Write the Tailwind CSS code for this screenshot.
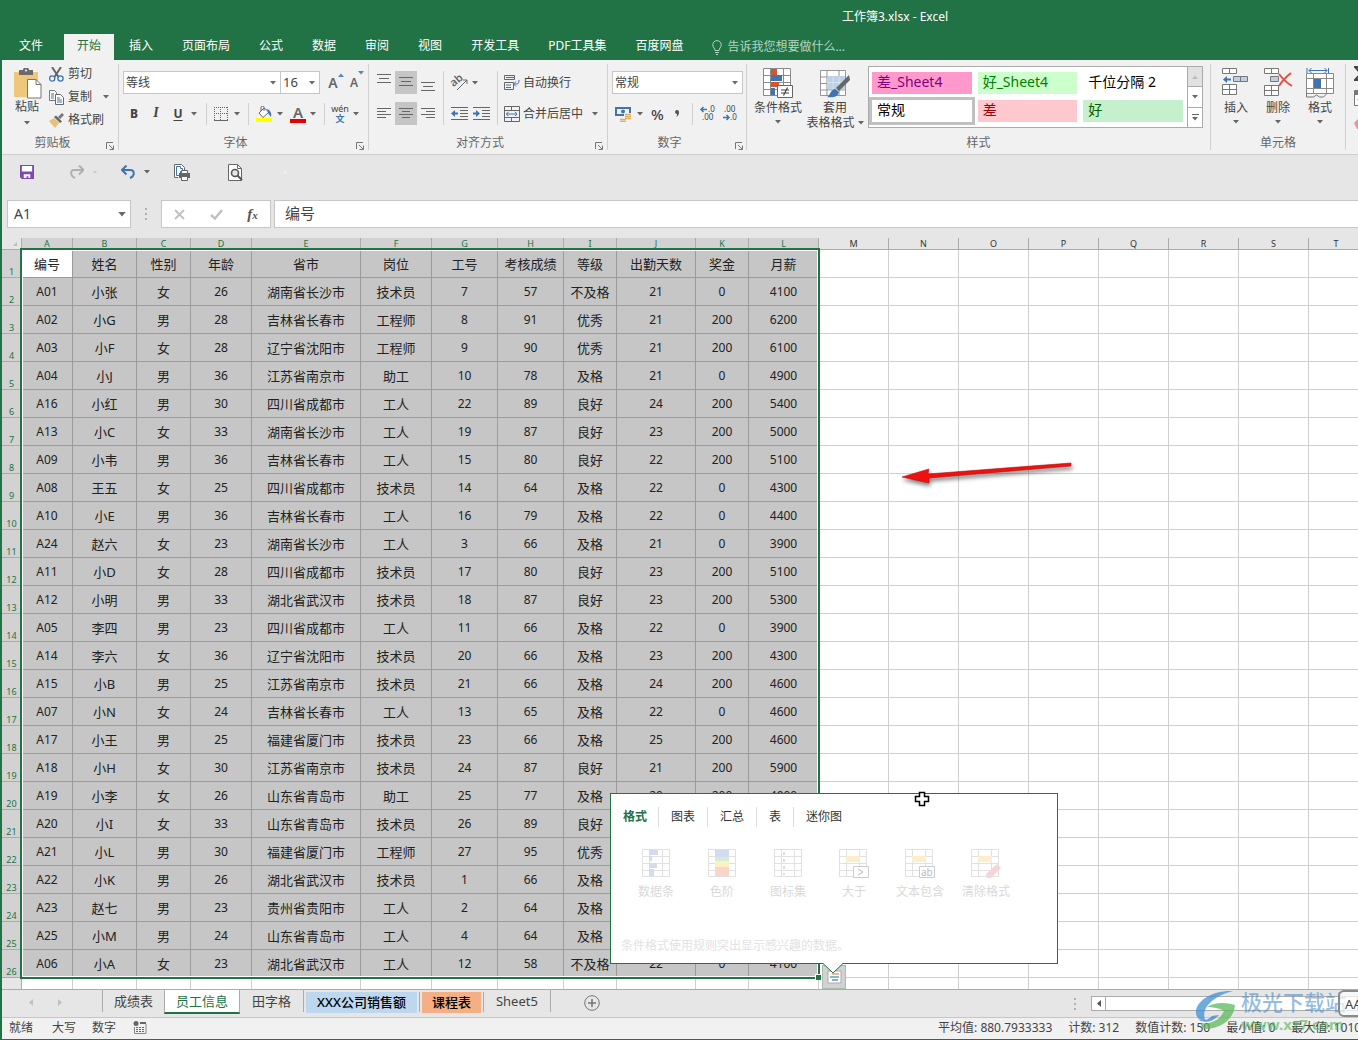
<!DOCTYPE html>
<html lang="zh-CN">
<head>
<meta charset="utf-8">
<meta name="viewport" content="width=device-width, initial-scale=1">
<title>工作簿3.xlsx - Excel</title>
<script src="https://cdn.jsdelivr.net/npm/@tailwindcss/browser@4"></script>
</head>
<body class="min-h-screen flex flex-col overflow-hidden border-l-2 border-b-2 border-[#217346] bg-[#e6e6e6] font-['Noto_Sans','Noto_Sans_CJK_SC',sans-serif] text-xs text-[#444]">

<svg class="hidden" aria-hidden="true">
  <symbol id="caret" viewBox="0 0 6 4"><path d="M0 0h6L3 3.5z" fill="currentColor" opacity=".8"/></symbol>
  <symbol id="launch" viewBox="0 0 8 8"><path d="M.5 7V.5H7M3 3l4 4M7.5 3.5v4h-4" fill="none" stroke="#777"/></symbol>
  <symbol id="grid" viewBox="0 0 28 28"><path d="M.5 .5h27v27H.5zM.5 7.5h27M.5 14.5h27M.5 21.5h27M7.5 .5v27M20.5 .5v27" fill="#fff" stroke="#8a8a8a"/></symbol>
</svg>

<!-- Title bar and ribbon tabs -->
<header class="bg-[#217346] text-white">
  <div class="flex h-[34px] items-center justify-center pl-[430px]"><h1>工作簿3.xlsx - Excel</h1></div>
  <nav class="flex h-[26px] gap-px whitespace-nowrap pl-1 leading-6">
    <a href="#" class="mr-[6px] pl-[13px] pr-[14px]">文件</a>
    <a href="#" class="bg-[#f1f1f1] px-[13px] text-[#217346]">开始</a>
    <a href="#" class="px-[14px]">插入</a>
    <a href="#" class="px-[14px]">页面布局</a>
    <a href="#" class="px-[14px]">公式</a>
    <a href="#" class="px-[14px]">数据</a>
    <a href="#" class="px-[14px]">审阅</a>
    <a href="#" class="px-[14px]">视图</a>
    <a href="#" class="px-[14px]">开发工具</a>
    <a href="#" class="px-[14px]">PDF工具集</a>
    <a href="#" class="px-[14px]">百度网盘</a>
    <a href="#" class="flex items-center gap-[5px] px-[14px] text-[#b5d3c2]">
      <svg class="h-[15px] w-[10px]" viewBox="0 0 10 15" fill="none" stroke="currentColor"><path d="M3 10.500C3 8.500 .8 7.500 .8 4.800a4.200 4.200 0 0 1 8.400 0C9.200 7.500 7 8.500 7 10.500zM3 12.500h4M4 14.500h2"/></svg>告诉我您想要做什么...</a>
  </nav>
</header>

<!-- Ribbon -->
<section class="flex h-[95px] overflow-hidden whitespace-nowrap border-b border-[#cfcfcf] bg-[#f1f1f1] py-1">
  <!-- Clipboard -->
  <div class="flex w-[117px] shrink-0 flex-col border-r border-[#d0d0d0]">
    <div class="flex flex-1 gap-2 pl-[11px]">
      <button class="flex w-7 flex-col items-center pt-1 leading-4">
        <svg class="h-[31px] w-[30px] shrink-0" viewBox="0 0 30 31"><path d="M2 4h24v25H2z" fill="#eec67c"/><path d="M7 2h4a3 2.500 0 0 1 6 0h4v5H7z" fill="#6a6a6a"/><circle cx="14" cy="2.500" r="1" fill="#fff"/><path d="M15.500 11.500h8.500l5 5v13.500H15.500z" fill="#fff" stroke="#777"/><path d="M24 11.500v5h5" fill="none" stroke="#777"/></svg>
        <span>粘贴</span><svg class="mt-1.5 h-1 w-1.5"><use href="#caret"/></svg>
      </button>
      <div class="flex flex-col gap-[3px]">
        <button class="flex h-5 items-center gap-1"><svg class="size-[15px]" viewBox="0 0 15 15" fill="none"><path d="M3 0l6.500 10M12 0L5.500 10" stroke="#666" stroke-width="2"/><circle cx="3.200" cy="11.500" r="2.600" stroke="#3f74b0" stroke-width="1.300"/><circle cx="11.500" cy="11.500" r="2.600" stroke="#3f74b0" stroke-width="1.300"/></svg>剪切</button>
        <button class="flex h-5 items-center gap-1"><svg class="size-[15px]" viewBox="0 0 15 15" fill="#fff"><path d="M.5 .5h5l2 2v8h-7z" stroke="#777"/><path d="M6.500 4.500h5l3 3v7h-8z" stroke="#666"/><path d="M2 4h3M2 6h3M2 8h3M8 8h3M8 10h5M8 12h5" stroke="#3f74b0"/></svg>复制<svg class="ml-[7px] h-1 w-1.5"><use href="#caret"/></svg></button>
        <button class="flex h-5 items-center gap-1"><svg class="size-[15px]" viewBox="0 0 15 15"><path d="M0 8l5-3 5 5-4 5z" fill="#eabf78"/><path d="M5 4l2-1.500 6 6L11 10z" fill="#666"/><path d="M9 4l4-4 2 2-4 4z" fill="#777"/></svg>格式刷</button>
      </div>
    </div>
    <div class="flex h-3.5 items-end leading-[14px]"><span class="flex-1 pr-[3px] text-center text-[#666]">剪贴板</span><button aria-label="剪贴板设置" class="mr-1"><svg class="size-2"><use href="#launch"/></svg></button></div>
  </div>
  <!-- Font -->
  <div class="flex w-[250px] shrink-0 flex-col border-r border-[#d0d0d0]">
    <div class="flex flex-1 flex-col gap-2 pl-1 pt-[7px]">
      <div class="flex h-[23px] items-center">
        <label class="flex h-full w-[158px] items-center border border-[#c6c6c6] bg-white pr-1"><select aria-label="字体" class="flex-1 appearance-none pl-0.5"><option>等线</option></select><svg class="h-1 w-1.5"><use href="#caret"/></svg></label>
        <label class="flex h-full w-[39px] items-center border border-l-0 border-[#c6c6c6] bg-white pr-1"><select aria-label="字号" class="w-6 flex-1 appearance-none pl-0.5 text-[13px]"><option>16</option></select><svg class="h-1 w-1.5"><use href="#caret"/></svg></label>
        <button class="relative ml-1 w-[18px] text-[14px] font-semibold leading-5 text-[#666]">A<svg class="absolute -right-0.5 top-0 h-1 w-1.5 rotate-180 text-[#2f6cb0]"><use href="#caret"/></svg></button>
        <button class="relative ml-1 w-[16px] text-xs font-semibold leading-4 text-[#666]">A<svg class="absolute -right-0.5 -top-1 h-1 w-1.5 text-[#2f6cb0]"><use href="#caret"/></svg></button>
      </div>
      <div class="flex h-[23px] items-center">
        <button class="w-[22px] font-extrabold">B</button>
        <button class="w-[22px] font-['Liberation_Serif',serif] text-[14px] font-bold italic">I</button>
        <button class="w-[22px] font-bold underline underline-offset-2">U</button>
        <svg class="ml-[2px] mr-[9px] h-1 w-1.5"><use href="#caret"/></svg>
        <span class="h-[22px] w-px bg-[#d0d0d0]"></span>
        <button aria-label="边框" class="ml-[7px]"><svg class="size-[14px]" viewBox="0 0 14 14" fill="none" stroke="#666"><path d="M0 .5h14M0 6.500h14M.5 0v13M6.500 0v13M13.500 0v13" stroke-dasharray="1 1"/><path d="M0 13.500h14"/></svg></button>
        <svg class="ml-1.5 mr-2 h-1 w-1.5"><use href="#caret"/></svg>
        <span class="h-[22px] w-px bg-[#d0d0d0]"></span>
        <button aria-label="填充颜色" class="ml-[7px]"><svg class="size-4" viewBox="0 0 16 16"><path d="M0 12h16v4H0z" fill="#ff0"/><path d="M3 7l5-5 5 4-6 5.500z" fill="#fff" stroke="#666"/><path d="M5 5V1.500a1.500 1.500 0 0 1 3 0V5" fill="none" stroke="#666"/><path d="M11 3c3 1 5 4 4 8l-3-4z" fill="#3f74b0"/></svg></button>
        <svg class="ml-[5px] mr-[7px] h-1 w-1.5"><use href="#caret"/></svg>
        <button class="h-[18px] w-4 border-b-4 border-[#e60000] text-[15px] font-semibold leading-[14px] text-[#666]">A</button>
        <svg class="ml-1 mr-2 h-1 w-1.5"><use href="#caret"/></svg>
        <span class="h-[22px] w-px bg-[#d0d0d0]"></span>
        <button class="ml-[6px] flex w-[18px] flex-col items-center text-[9px] leading-[10px]"><span>wén</span><span class="font-bold text-[#3f74b0]">文</span></button>
        <svg class="ml-1 h-1 w-1.5"><use href="#caret"/></svg>
      </div>
    </div>
    <div class="flex h-3.5 items-end leading-[14px]"><span class="flex-1 pr-1 text-center text-[#666]">字体</span><button aria-label="字体设置" class="mr-1"><svg class="size-2"><use href="#launch"/></svg></button></div>
  </div>
  <!-- Alignment -->
  <div class="flex w-[239px] shrink-0 flex-col border-r border-[#d0d0d0]">
    <div class="flex flex-1 pl-1 pt-[7px]">
      <div class="grid grid-cols-3 content-start gap-y-2">
        <button aria-label="顶端对齐" class="h-[23px] w-[22px] px-1"><svg class="h-[23px] w-[14px]" viewBox="0 0 14 23" stroke="#666"><path d="M0 3.500h14M2 7.500h10M0 11.500h14"/></svg></button>
        <button aria-label="垂直居中" class="h-[23px] w-[22px] bg-[#c5c5c5] px-1"><svg class="h-[23px] w-[14px]" viewBox="0 0 14 23" stroke="#666"><path d="M0 6.500h14M2 10.500h10M0 14.500h14"/></svg></button>
        <button aria-label="底端对齐" class="h-[23px] w-[22px] px-1"><svg class="h-[23px] w-[14px]" viewBox="0 0 14 23" stroke="#666"><path d="M0 11.500h14M2 15.500h10M0 19.500h14"/></svg></button>
        <button aria-label="左对齐" class="h-[23px] w-[22px] px-1"><svg class="h-[23px] w-[14px]" viewBox="0 0 14 23" stroke="#666"><path d="M0 6.500h14M0 9.500h9M0 12.500h14M0 15.500h9"/></svg></button>
        <button aria-label="居中" class="h-[23px] w-[22px] bg-[#c5c5c5] px-1"><svg class="h-[23px] w-[14px]" viewBox="0 0 14 23" stroke="#666"><path d="M0 6.500h14M3 9.500h8M0 12.500h14M3 15.500h8"/></svg></button>
        <button aria-label="右对齐" class="h-[23px] w-[22px] px-1"><svg class="h-[23px] w-[14px]" viewBox="0 0 14 23" stroke="#666"><path d="M0 6.500h14M5 9.500h9M0 12.500h14M5 15.500h9"/></svg></button>
      </div>
      <span class="ml-1 h-[54px] w-px bg-[#d0d0d0]"></span>
      <div class="flex w-[53px] flex-col gap-2 pl-[7px]">
        <button aria-label="方向" class="flex h-[23px] items-center gap-1"><svg class="size-[17px] overflow-visible" viewBox="0 0 17 17"><text x="1" y="11" font-size="11" font-weight="600" fill="#666" transform="rotate(-40 5 10)">ab</text><path d="M6 16L16 6M12 6h4v4" fill="none" stroke="#666"/></svg><svg class="h-1 w-1.5"><use href="#caret"/></svg></button>
        <div class="flex h-[23px] items-center gap-[5px]">
          <button aria-label="减少缩进"><svg class="h-[13px] w-[17px]" viewBox="0 0 17 13"><path d="M0 .5h17M9 3.500h8M9 6.500h8M9 9.500h8M0 12.500h17" stroke="#666"/><path d="M0 6.500l4-3.500v2.500h3v2H4V10z" fill="#3f74b0"/></svg></button>
          <button aria-label="增加缩进"><svg class="h-[13px] w-[17px]" viewBox="0 0 17 13"><path d="M0 .5h17M9 3.500h8M9 6.500h8M9 9.500h8M0 12.500h17" stroke="#666"/><path d="M7 6.500L3 3v2.500H0v2h3V10z" fill="#3f74b0"/></svg></button>
        </div>
      </div>
      <span class="h-[54px] w-px bg-[#d0d0d0]"></span>
      <div class="flex flex-1 flex-col gap-2 pl-[6px]">
        <button class="flex h-[23px] items-center gap-[3px]"><svg class="h-4 w-4" viewBox="0 0 16 16" fill="none"><path d="M.5 .5h10v4H.5zM.5 7.500h9v7H.5z" stroke="#666"/><path d="M2 2.500h9M2 10h5M2 12.500h5M10 9h3c2 0 2-3 2-4M12 6.500L9.500 9l2.500 2.500" stroke="#3f74b0"/></svg>自动换行</button>
        <button class="flex h-[23px] items-center gap-[3px]"><svg class="h-4 w-4" viewBox="0 0 16 16" fill="none"><path d="M.5 .5h15v15H.5zM.5 4.500h15M.5 11.500h15M7.500 .5v4M7.500 11.500v4" stroke="#666"/><path d="M2 8h11M4.500 5.800L2.500 8l2 2.200M11 5.800L13 8l-2 2.200" stroke="#3f74b0"/></svg>合并后居中<svg class="ml-1.5 h-1 w-1.5"><use href="#caret"/></svg></button>
      </div>
    </div>
    <div class="flex h-3.5 items-end leading-[14px]"><span class="flex-1 pr-1 text-center text-[#666]">对齐方式</span><button aria-label="对齐设置" class="mr-1"><svg class="size-2"><use href="#launch"/></svg></button></div>
  </div>
  <!-- Number -->
  <div class="flex w-[139px] shrink-0 flex-col border-r border-[#d0d0d0]">
    <div class="flex flex-1 flex-col gap-2 pl-1 pr-[3px] pt-[7px]">
      <label class="flex h-[23px] items-center border border-[#c6c6c6] bg-white pr-1"><select aria-label="数字格式" class="flex-1 appearance-none pl-0.5"><option>常规</option></select><svg class="h-1 w-1.5"><use href="#caret"/></svg></label>
      <div class="flex h-[23px] items-center">
        <button aria-label="会计数字格式" class="ml-[3px]"><svg class="size-4" viewBox="0 0 16 16"><path d="M0 1h16v9H0z" fill="#3f74b0"/><path d="M2 3h12v5H2z" fill="#f1f1f1"/><circle cx="8" cy="5.500" r="2" fill="#3f74b0"/><path d="M9 7h7v6H9zM5 12h7v4H5z" fill="#f1f1f1"/><path d="M10 8.500h6M10 10.500h6M10 12.500h6M5 13.500h6M5 15.500h6" stroke="#e0ae5c" stroke-width="1.500"/></svg></button>
        <svg class="ml-1.5 mr-[8px] h-1 w-1.5"><use href="#caret"/></svg>
        <button class="text-[15px] font-medium leading-5">%</button>
        <button aria-label="千位分隔样式" class="ml-[10px] flex h-[18px] w-2 items-center"><svg class="h-2 w-1.5" viewBox="0 0 6 8"><path d="M1 2a2 2 0 0 1 4 0c0 3-1 4-3 5 1-1 1-2 1-3C2 4 1 3 1 2z" fill="#555"/></svg></button>
        <span class="ml-2.5 h-[22px] w-px bg-[#d0d0d0]"></span>
        <button aria-label="增加小数位数" class="ml-[7px] h-[15px] w-4"><svg class="h-[15px] w-4 overflow-visible" viewBox="0 0 16 15"><text x="8" y="6" font-size="8" fill="#444">.0</text><text x="2" y="14" font-size="8" fill="#444">.00</text><path d="M1 3.500h6M3.500 1L1 3.500 3.500 6" stroke="#3f74b0" stroke-width="1.500" fill="none"/></svg></button>
        <button aria-label="减少小数位数" class="ml-1.5 h-[15px] w-4"><svg class="h-[15px] w-4 overflow-visible" viewBox="0 0 16 15"><text x="2" y="6" font-size="8" fill="#444">.00</text><text x="8" y="14" font-size="8" fill="#444">.0</text><path d="M1 11.500h6M4.500 9L7 11.500 4.500 14" stroke="#3f74b0" stroke-width="1.500" fill="none"/></svg></button>
      </div>
    </div>
    <div class="flex h-3.5 items-end leading-[14px]"><span class="flex-1 pr-1 text-center text-[#666]">数字</span><button aria-label="数字设置" class="mr-[3px]"><svg class="size-2"><use href="#launch"/></svg></button></div>
  </div>
  <!-- Styles -->
  <div class="flex w-[464px] shrink-0 flex-col border-r border-[#d0d0d0]">
    <div class="flex flex-1 pl-1 pt-0.5">
      <button class="flex w-[54px] flex-col items-center pt-0.5 leading-4">
        <svg class="mb-px h-[31px] w-[30px] shrink-0" viewBox="0 0 30 31"><use href="#grid" width="28" height="28" y="0"/><path d="M8 1h6v6H8zM8 14h8v5H8z" fill="#d9532c"/><path d="M8 7h11v6H8zM8 20h4v7H8z" fill="#3f74b0"/><path d="M14.500 17.500h15v12h-15z" fill="#fff" stroke="#666"/><path d="M18 22h8M18 25h8M24.500 19.500l-4 8" stroke="#444" stroke-width="1.200"/></svg>
        <span>条件格式</span><svg class="mt-1 h-1 w-1.5"><use href="#caret"/></svg>
      </button>
      <button class="flex w-[60px] flex-col items-center pt-0.5 leading-4">
        <svg class="mb-px h-[31px] w-[30px] shrink-0" viewBox="0 0 30 31"><use href="#grid" width="26" height="26" y="2"/><path d="M7 8h18v13H7z" fill="#bcd0e6"/><path d="M13 8.500v13M19 8.500v13M7 14.500h18" stroke="#d7e4f1"/><path d="M29 7L16 20l3 3L30 12z" fill="#666"/><path d="M7 29c3-1 3-7 8-8l4 3c-1 5-7 6-12 5z" fill="#3f74b0"/></svg>
        <span>套用</span><span class="flex items-center gap-[3px] whitespace-nowrap leading-[14px]">表格格式<svg class="h-1 w-1.5"><use href="#caret"/></svg></span>
      </button>
      <div class="ml-[3px] flex h-[62px] w-[335px] border border-[#ababab] bg-white text-left text-[14px] leading-5 text-black">
        <div class="grid flex-1 grid-cols-3 content-center gap-x-1.5 gap-y-1.5 pl-[3px] pr-1">
          <button class="h-[22px] bg-[#ff99cc] pb-0.5 pl-[5px] text-left text-[#800080]">差_Sheet4</button>
          <button class="h-[22px] bg-[#ccffcc] pb-0.5 pl-[5px] text-left text-[#008000]">好_Sheet4</button>
          <button class="h-[22px] pb-0.5 pl-[5px] text-left">千位分隔 2</button>
          <button class="h-[22px] pb-0.5 pl-[5px] text-left outline-3 outline-[#c0c0c0]">常规</button>
          <button class="h-[22px] bg-[#ffc7ce] pb-0.5 pl-[5px] text-left text-[#9c0006]">差</button>
          <button class="h-[22px] bg-[#c6efce] pb-0.5 pl-[5px] text-left text-[#006100]">好</button>
        </div>
        <div class="flex w-[15px] flex-col divide-y divide-[#ababab] border-l border-[#ababab] text-[#444]">
          <button aria-label="上一行" class="flex flex-1 items-center justify-center bg-[#e1e1e1] text-[#b5b5b5]"><svg class="h-1 w-1.5 rotate-180"><use href="#caret"/></svg></button>
          <button aria-label="下一行" class="flex flex-1 items-center justify-center"><svg class="h-1 w-1.5"><use href="#caret"/></svg></button>
          <button aria-label="其他" class="flex flex-1 flex-col items-center justify-center gap-0.5"><span class="h-px w-[7px] bg-[#666]"></span><svg class="h-1 w-1.5"><use href="#caret"/></svg></button>
        </div>
      </div>
    </div>
    <div class="h-3.5 text-center leading-[14px] text-[#666]">样式</div>
  </div>
  <!-- Cells -->
  <div class="flex w-[135px] shrink-0 flex-col border-r border-[#d0d0d0]">
    <div class="flex flex-1 pl-1 pt-1">
      <button class="flex w-[42px] flex-col items-center leading-4">
        <svg class="mb-px h-[31px] w-[28px] shrink-0" viewBox="0 0 28 31" fill="#fff" stroke="#777"><path d="M.5 .5h14v5H.5zM7.500 .5v5M.5 16.500h14v10H.5zM7.500 16.500v10M.5 21.500h14"/><path d="M11.500 8.500h14v5h-14zM18.500 8.500v5" fill="#bcd0e6"/><path d="M1 11.500l4-3.500v2.500h4v2H5v2.500z" fill="#3f74b0" stroke="none"/></svg>
        <span>插入</span><svg class="mt-1 h-1 w-1.5"><use href="#caret"/></svg>
      </button>
      <button class="flex w-[42px] flex-col items-center leading-4">
        <svg class="mb-px h-[31px] w-[30px] shrink-0" viewBox="0 0 30 31" fill="#fff" stroke="#777"><path d="M1.500 .5h14v5h-14zM8.500 .5v5M1.500 17.500h14v10h-14zM8.500 17.500v10M1.500 22.500h14"/><path d="M7.500 8.500h8v5h-8z" fill="#bcd0e6"/><path d="M16 6c3 4 8 9 13 12M28 5c-5 4-9 8-12 13" fill="none" stroke="#e0523f" stroke-width="2"/></svg>
        <span>删除</span><svg class="mt-1 h-1 w-1.5"><use href="#caret"/></svg>
      </button>
      <button class="flex w-[42px] flex-col items-center leading-4">
        <svg class="mb-px h-[31px] w-[28px] shrink-0" viewBox="0 0 28 31"><path d="M.5 5.500h27v20H.5zM.5 10.500h27M.5 20.500h27M7.500 5.500v20M20.500 5.500v20" fill="#fff" stroke="#8a8a8a"/><path d="M8 11h7v9H8z" fill="#3f74b0"/><path d="M1 0v5M22.500 0v5M3 2.500h18M5.500 0L3 2.500 5.500 5M18.500 0L21 2.500 18.500 5" stroke="#3f74b0" fill="none"/><path d="M.5 25v4h7l3-2 3 2h4l3-3" fill="none" stroke="#777"/></svg>
        <span>格式</span><svg class="mt-1 h-1 w-1.5"><use href="#caret"/></svg>
      </button>
    </div>
    <div class="h-3.5 text-center leading-[14px] text-[#666]">单元格</div>
  </div>
  <!-- Editing -->
  <div class="flex w-24 shrink-0 flex-col gap-2 pl-2 pt-0.5">
    <button aria-label="自动求和"><svg class="size-4" viewBox="0 0 16 16"><path d="M12 4V1H1l6 6.500L1 14h11v-3" fill="none" stroke="#444" stroke-width="2"/></svg></button>
    <button aria-label="填充"><svg class="size-4" viewBox="0 0 16 16"><path d="M.5 .5h14v15H.5z" fill="#fff" stroke="#777"/><path d="M1 1h13v4H1z" fill="#777"/><path d="M8 6v6M4 9l4 4 4-4" stroke="#3f74b0" stroke-width="2" fill="none"/></svg></button>
    <button aria-label="清除"><svg class="size-4" viewBox="0 0 16 16"><path d="M0 9l8-8 6 6-8 8H3z" fill="#f08fa4"/></svg></button>
  </div>
</section>

<!-- Quick access -->
<section class="flex h-[34px] items-center pl-[18px]">
  <button aria-label="保存"><svg class="size-[14px]" viewBox="0 0 15 15"><path d="M0 0h15v15H2l-2-2z" fill="#7d4bb0"/><path d="M2 1h11v6H2zM4 10h7v4H9v-2H7v2H4z" fill="#fff"/></svg></button>
  <button aria-label="恢复" class="ml-[35px]"><svg class="h-[14px] w-[15px]" viewBox="0 0 15 14"><path d="M14 5H5C1 5 1 11 6 13M10 .5L14.500 5 10 9.500" fill="none" stroke="#b0b0b0" stroke-width="2"/></svg></button>
  <svg class="ml-[9px] h-[3px] w-1 text-[#bbb]"><use href="#caret"/></svg>
  <button aria-label="撤消" class="ml-6"><svg class="h-[14px] w-[15px]" viewBox="0 0 15 14"><path d="M1 5h8c5 0 5 6 0 8M5.500 .5L1 5l4.500 4.500" fill="none" stroke="#3f74b0" stroke-width="2"/></svg></button>
  <svg class="ml-2 h-1 w-1.5"><use href="#caret"/></svg>
  <button aria-label="打印预览" class="ml-6"><svg class="h-[17px] w-[17px]" viewBox="0 0 17 17"><path d="M4 13.500H.5V.5h7l3 3V7" fill="#fff" stroke="#666"/><path d="M2.500 2.500h4v2h2v3h-2v4h-4z" fill="none" stroke="#3f74b0"/><path d="M5 9h11v5H5z" fill="#666"/><path d="M7.500 6.500h6v3h-6zM7.500 12.500h6v4h-6z" fill="#fff" stroke="#666"/></svg></button>
  <button aria-label="打印" class="ml-[37px]"><svg class="h-[17px] w-[15px]" viewBox="0 0 15 17"><path d="M.5 .5h9l4 4v12H.5z" fill="#fff" stroke="#666"/><path d="M9.500 .5v4h4" fill="none" stroke="#666"/><circle cx="7" cy="9" r="3.500" fill="#e6e6e6" stroke="#555" stroke-width="1.600"/><path d="M9.500 11.500l4.500 4.500" stroke="#555" stroke-width="2"/></svg></button>
  <span class="ml-[41px] size-[3px] bg-[#eee]"></span>
</section>

<!-- Formula bar -->
<section class="flex h-[49px] items-start pl-[5px] pt-[11px]">
  <div class="flex h-7 w-[124px] items-center border border-[#c6c6c6] bg-white pr-1">
    <input aria-label="名称框" value="A1" class="w-10 flex-1 pl-1.5 text-[14px] outline-none"><button aria-label="名称列表"><svg class="h-[5px] w-2"><use href="#caret"/></svg></button>
  </div>
  <div class="flex h-7 w-[30px] flex-col items-center justify-center gap-[3px]"><span class="size-0.5 bg-[#b0b0b0]"></span><span class="size-0.5 bg-[#b0b0b0]"></span><span class="size-0.5 bg-[#b0b0b0]"></span></div>
  <div class="flex h-7 w-[110px] items-center justify-around border border-[#c6c6c6] bg-white">
    <button aria-label="取消"><svg class="size-[11px]" viewBox="0 0 11 11" stroke="#c0c0c0" stroke-width="1.800"><path d="M1 1l9 9M10 1l-9 9"/></svg></button>
    <button aria-label="输入"><svg class="h-[11px] w-[13px]" viewBox="0 0 13 11" fill="none" stroke="#c0c0c0" stroke-width="2.400"><path d="M1 6l4 3.500L12 1"/></svg></button>
    <button class="font-['Liberation_Serif',serif] text-[15px] font-bold italic leading-5 text-[#555]">f<span class="text-[11px]">x</span></button>
  </div>
  <input aria-label="编辑栏" value="编号" class="ml-[3px] h-7 min-w-0 flex-1 border border-r-0 border-[#c6c6c6] bg-white pb-1 pl-2.5 text-[15px] outline-none">
</section>

<!-- Worksheet -->
<main class="relative flex-1">
  <div class="overflow-hidden">
    <table class="w-[1362px] table-fixed border-separate border-spacing-0 border-b border-[#ababab] text-center text-[#222]">
      <colgroup>
        <col class="w-[20px]"><col class="w-[51px]"><col class="w-[64px]"><col class="w-[54px]"><col class="w-[61px]"><col class="w-[109px]"><col class="w-[71px]"><col class="w-[66px]"><col class="w-[66px]"><col class="w-[53px]"><col class="w-[79px]"><col class="w-[53px]"><col class="w-[70px]">
        <col class="w-[70px]"><col class="w-[70px]"><col class="w-[70px]"><col class="w-[70px]"><col class="w-[70px]"><col class="w-[70px]"><col class="w-[70px]"><col class="w-[55px]">
      </colgroup>
      <thead><tr id="letters" class="h-3"></tr></thead>
      <tbody id="cells"></tbody>
    </table>
  </div>

  <!-- Selection frame -->
  <div class="pointer-events-none absolute left-[18px] top-[10px] h-[731px] w-[800px] border-2 border-[#217346] inset-ring inset-ring-white">
    <span class="absolute -bottom-[3px] -right-[3px] size-[6px] border-l border-t border-white bg-[#217346]"></span>
  </div>

  <!-- Annotation arrow -->
  <svg class="absolute left-[896px] top-[220px] h-[32px] w-[184px] drop-shadow-[1px_3px_2px_rgba(0,0,0,0.5)]" viewBox="0 0 184 32"><path d="M173 5l0 3-142 12 0 5L4 19l27-8-1 5z" fill="#f01010" stroke="#b31212" stroke-width=".6"/></svg>

  <!-- Quick analysis -->
  <button aria-label="快速分析" class="absolute left-[820px] top-[727px] flex h-6 w-6 items-center justify-center border border-[#a9bcae] bg-[#d0d3d0]"><svg class="h-[14px] w-4" viewBox="0 0 16 14"><path d="M2 1h13v12H2z" fill="#fff" stroke="#aaa"/><path d="M6 4h7" stroke="#e59a7c" stroke-width="1.500"/><path d="M4 7h9" stroke="#55a9a5" stroke-width="1.500"/><path d="M6 10h6" stroke="#6a90c0" stroke-width="1.500"/></svg></button>
  <section class="absolute left-[608px] top-[555px] h-[171px] w-[448px] border border-[#217346] bg-white">
    <nav class="mt-3 flex h-[22px] items-center divide-x divide-[#dcdcdc] pl-3 leading-[20px] text-[#333]">
      <a href="#" class="pr-[11px] font-bold text-[#217346]">格式</a><a href="#" class="px-3">图表</a><a href="#" class="px-3">汇总</a><a href="#" class="px-3">表</a><a href="#" class="px-3">迷你图</a>
    </nav>
    <div class="mt-[21px] flex pl-3 leading-4 text-[#d9d9d9]">
      <button class="flex w-[66px] flex-col items-center gap-1.5"><svg class="h-[29px] w-[30px]" viewBox="0 0 30 29"><g opacity=".25"><use href="#grid" width="28" height="28" x="1"/></g><path d="M8 1h9v5H8zM8 7h3v5H8zM8 14h8v5H8zM8 20h5v7H8z" fill="#d3dcee"/></svg>数据条</button>
      <button class="flex w-[66px] flex-col items-center gap-1.5"><svg class="h-[29px] w-[30px]" viewBox="0 0 30 29"><g opacity=".25"><use href="#grid" width="28" height="28" x="1"/></g><path d="M8 1h14v7H8z" fill="#d3dcee"/><path d="M8 8h14v4H8z" fill="#d6ebd5"/><path d="M8 12h14v6H8z" fill="#fdf1c2"/><path d="M8 18h14v9H8z" fill="#fbd5cb"/></svg>色阶</button>
      <button class="flex w-[66px] flex-col items-center gap-1.5"><svg class="h-[29px] w-[30px]" viewBox="0 0 30 29"><g opacity=".25"><use href="#grid" width="28" height="28" x="1"/></g><path d="M11 3v23" stroke="#ddd" stroke-width="2" stroke-dasharray="3 4"/></svg>图标集</button>
      <button class="flex w-[66px] flex-col items-center gap-1.5"><svg class="h-[29px] w-[30px]" viewBox="0 0 30 29"><g opacity=".25"><use href="#grid" width="28" height="28"/></g><path d="M7 7h14v6H7z" fill="#fdeecb"/><path d="M14.500 17.500h15v11h-15z" fill="#fff" stroke="#ccc"/><path d="M19 20l5 3-5 3" fill="none" stroke="#bbb"/></svg>大于</button>
      <button class="flex w-[66px] flex-col items-center gap-1.5"><svg class="h-[29px] w-[30px] overflow-visible" viewBox="0 0 30 29"><g opacity=".25"><use href="#grid" width="28" height="28"/></g><path d="M7 7h14v6H7z" fill="#fdeecb"/><path d="M14.500 17.500h15v11h-15z" fill="#fff" stroke="#ccc"/><text x="16" y="27" font-size="10" fill="#bbb">ab</text></svg>文本包含</button>
      <button class="flex w-[66px] flex-col items-center gap-1.5"><svg class="h-[29px] w-[30px]" viewBox="0 0 30 29"><g opacity=".25"><use href="#grid" width="28" height="28"/></g><path d="M7 7h14v6H7z" fill="#fdeecb"/><path d="M15 25l11-10 4 4-10 10h-4z" fill="#f8d3d9"/></svg>清除格式</button>
    </div>
    <p class="mt-[38px] pl-2.5 leading-4 text-[#e2e2e2]">条件格式使用规则突出显示感兴趣的数据。</p>
    <svg class="absolute left-[211px] top-[168px] h-[12px] w-[22px]" viewBox="0 0 22 12"><path d="M0 0h22L11 11z" fill="#fff"/><path d="M0 1.500h1L11 11 21 1.500h1" fill="none" stroke="#217346"/></svg>
  </section>

  <!-- Cell cursor -->
  <svg class="absolute left-[912px] top-[553px] size-[16px]" viewBox="0 0 16 16"><path d="M5.500 1.500h5v4h4v5h-4v4h-5v-4h-4v-5h4z" fill="#fff" stroke="#000" stroke-width="1.500"/></svg>
</main>

<!-- Sheet tabs -->
<footer class="relative overflow-hidden whitespace-nowrap">
  <div class="flex h-[27px] items-start text-[13px] leading-[22px]">
    <button aria-label="上一张" class="ml-[27px] mt-[9px]"><svg class="h-[7px] w-1" viewBox="0 0 4 7"><path d="M4 0v7L0 3.500z" fill="#c0c0c0"/></svg></button>
    <button aria-label="下一张" class="ml-[25px] mt-[9px]"><svg class="h-[7px] w-1" viewBox="0 0 4 7"><path d="M0 0v7l4-3.500z" fill="#c0c0c0"/></svg></button>
    <a href="#" class="ml-10 border-l border-[#ababab] px-[11px]">成绩表</a>
    <a href="#" class="border-x border-b-2 border-x-[#ababab] border-b-[#217346] bg-white px-[11px] text-[#217346]">员工信息</a>
    <a href="#" class="border-r border-[#ababab] px-3">田字格</a>
    <a href="#" class="ml-0.5 mt-0.5 bg-[#bdd7ee] px-[11px] font-medium leading-[21px] text-black">XXX公司销售额</a>
    <span class="mx-0.5 mt-0.5 h-5 w-px bg-[#ababab]"></span>
    <a href="#" class="mt-0.5 bg-[#f4b084] px-2.5 font-medium leading-[21px] text-black">课程表</a>
    <span class="ml-0.5 mt-0.5 h-5 w-px bg-[#ababab]"></span>
    <a href="#" class="border-r border-[#ababab] px-3">Sheet5</a>
    <button aria-label="新工作表" class="ml-[33px] mt-[5px]"><svg class="size-4" viewBox="0 0 16 16" fill="none" stroke="#777"><circle cx="8" cy="8" r="7.300"/><path d="M8 4v8M4 8h8" stroke-width="1.600"/></svg></button>
    <div class="ml-auto mt-2 flex flex-col gap-[3px]"><span class="size-0.5 bg-[#b0b0b0]"></span><span class="size-0.5 bg-[#b0b0b0]"></span><span class="size-0.5 bg-[#b0b0b0]"></span></div>
    <div class="ml-[15px] mt-1.5 flex h-[15px] w-[267px] border border-[#ababab] bg-white">
      <button aria-label="向左滚动" class="flex w-[14px] items-center justify-center border-r border-[#ababab]"><svg class="h-[7px] w-1" viewBox="0 0 4 7"><path d="M4 0v7L0 3.500z" fill="#555"/></svg></button>
    </div>
  </div>
  <div class="flex h-[22px] items-center border-t border-[#c6c6c6] bg-[#f1f1f1] pb-0.5 pl-[7px]">
    <span>就绪</span><span class="ml-[19px]">大写</span><span class="ml-4">数字</span>
    <svg class="ml-[17px] h-[13px] w-[14px]" viewBox="0 0 14 13"><circle cx="3" cy="2.500" r="2.500" fill="#666"/><path d="M7 1h6v2H7z" fill="#666"/><path d="M1.500 6v6.500h11.500V3" fill="none" stroke="#888"/><path d="M3 6.500h8M3 8.500h8M3 10.500h8" stroke="#666" stroke-dasharray="2 1"/></svg>
    <div class="-mr-2.5 ml-auto flex gap-4"><span>平均值: 880.7933333</span><span>计数: 312</span><span>数值计数: 150</span><span>最小值: 0</span><span>最大值: 10100</span></div>
  </div>
  <!-- Site watermark and input mode badge -->
  <div class="absolute right-[12px] top-0 flex items-start gap-1">
    <svg class="h-[40px] w-[42px]" viewBox="0 0 42 40"><path d="M38 1C16 0 0 12 1 23c0 5 5 8 10 8C5 22 14 7 38 1z" fill="#3f8fd0" opacity=".75"/><path d="M12 17c7-5 19-5 28-2-1 13-12 23-29 24-3-1-5-3-6-6 10 2 20-3 24-12-5-3-11-4-17-4z" fill="#5cb85a" opacity=".75"/><path d="M17 26c-5 5-11 6-15 2 5 6 15 5 22-3z" fill="#2f7fc4" opacity=".7"/></svg>
    <div><div class="text-[21px] font-medium leading-[24px] text-[#4a90d0]/60">极光下载站</div><div class="text-[15px] font-bold leading-[20px] text-[#4fb052]/60">www.xz7.com</div></div>
  </div>
  <div class="absolute -right-2 top-0 h-[27px] w-7 rounded-md border-2 border-[#8a8a8a] bg-white/70 pl-[5px] text-[13px] leading-[24px]">AA</div>
</footer>

<script>
const heads = "ABCDEFGHIJKLMNOPQRST".split("");
const rows = `编号,姓名,性别,年龄,省市,岗位,工号,考核成绩,等级,出勤天数,奖金,月薪
A01,小张,女,26,湖南省长沙市,技术员,7,57,不及格,21,0,4100
A02,小G,男,28,吉林省长春市,工程师,8,91,优秀,21,200,6200
A03,小F,女,28,辽宁省沈阳市,工程师,9,90,优秀,21,200,6100
A04,小J,男,36,江苏省南京市,助工,10,78,及格,21,0,4900
A16,小红,男,30,四川省成都市,工人,22,89,良好,24,200,5400
A13,小C,女,33,湖南省长沙市,工人,19,87,良好,23,200,5000
A09,小韦,男,36,吉林省长春市,工人,15,80,良好,22,200,5100
A08,王五,女,25,四川省成都市,技术员,14,64,及格,22,0,4300
A10,小E,男,36,吉林省长春市,工人,16,79,及格,22,0,4400
A24,赵六,女,23,湖南省长沙市,工人,3,66,及格,21,0,3900
A11,小D,女,28,四川省成都市,技术员,17,80,良好,23,200,5100
A12,小明,男,33,湖北省武汉市,技术员,18,87,良好,23,200,5300
A05,李四,男,23,四川省成都市,工人,11,66,及格,22,0,3900
A14,李六,女,36,辽宁省沈阳市,技术员,20,66,及格,23,200,4300
A15,小B,男,25,江苏省南京市,技术员,21,66,及格,24,200,4600
A07,小N,女,24,吉林省长春市,工人,13,65,及格,22,0,4600
A17,小王,男,25,福建省厦门市,技术员,23,66,及格,25,200,4600
A18,小H,女,30,江苏省南京市,技术员,24,87,良好,21,200,5900
A19,小李,女,26,山东省青岛市,助工,25,77,及格,20,200,4900
A20,小I,女,33,山东省青岛市,技术员,26,89,良好,,,
A21,小L,男,30,福建省厦门市,工程师,27,95,优秀,,,
A22,小K,男,26,湖北省武汉市,技术员,1,66,及格,,,
A23,赵七,男,23,贵州省贵阳市,工人,2,64,及格,,,
A25,小M,男,24,山东省青岛市,工人,4,64,及格,,,
A06,小A,女,23,湖北省武汉市,工人,12,58,不及格,22,0,4100`.split("\n").map(r => r.split(","));

document.getElementById("letters").innerHTML =
  '<th class="h-3 border-b border-r border-[#ababab] p-0"><svg class="ml-auto mr-1 size-1" viewBox="0 0 4 4"><path d="M4 0v4H0z" fill="#bbb"/></svg></th>' +
  heads.map((h, i) => i < 12
    ? `<th class="h-3 border-b border-r border-[#ababab] bg-[#d2d2d2] p-0 text-[9px] font-normal leading-[11px] text-[#217346]">${h}</th>`
    : `<th class="h-3 border-b border-r border-[#ababab] p-0 text-[9px] font-normal leading-[11px] text-[#333]">${h}</th>`).join("");

const cell = (v, r, c) => {
  if (c > 11) return '<td class="border-b border-r border-[#d0d0d0] bg-white p-0"></td>';
  const text = v || "";
  if (r === 0 && c === 0) return `<td class="border-b border-r border-[#9b9b9b] bg-white p-0 text-[13px] leading-[18px]">${text}</td>`;
  return /^[A-Z]?\d*$/.test(text)
    ? `<td class="border-b border-r border-[#9b9b9b] bg-[#c6c6c6] p-0 text-xs">${text}</td>`
    : `<td class="border-b border-r border-[#9b9b9b] bg-[#c6c6c6] p-0 text-[13px] leading-[18px] whitespace-nowrap">${text}</td>`;
};
document.getElementById("cells").innerHTML = rows.map((row, r) =>
  `<tr class="h-7"><th class="h-7 border-b border-r border-[#ababab] bg-[#d2d2d2] p-0 align-bottom text-[9px] font-normal leading-[10px] text-[#217346]">${r + 1}</th>` +
  heads.map((_, c) => cell(row[c], r, c)).join("") + "</tr>").join("") +
  '<tr class="h-[11px]"><th class="border-r border-[#ababab] p-0"></th>' +
  heads.map(() => '<td class="h-[11px] border-r border-[#d0d0d0] bg-white p-0"></td>').join("") + "</tr>";
</script>
</body>
</html>
